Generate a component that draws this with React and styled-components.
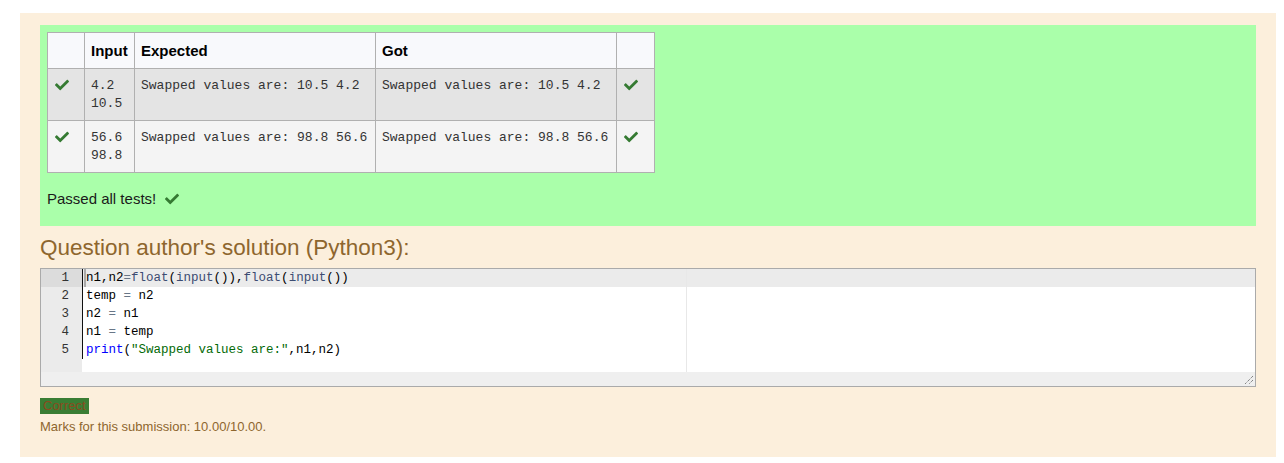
import React from "react";
import styled, { createGlobalStyle } from "styled-components";

const Global = createGlobalStyle`
  html, body { margin: 0; padding: 0; background: #fff; }
  body { font-family: "Liberation Sans", Arial, sans-serif; }
`;

const Page = styled.div`
  padding: 13px 8px 0 20px;
`;

const Outcome = styled.div`
  background: #fcefdc;
  padding: 12px 20px 22px 20px;
  color: #8e662e;
`;

const Feedback = styled.div`
  background: #aaffaa;
  padding: 7px 7px 17px 7px;
`;

const Table = styled.table`
  border-collapse: collapse;
  table-layout: fixed;
  width: 607px;
`;

const Th = styled.th`
  background: #f8f9fc;
  border: 1px solid #b0b0b0;
  text-align: left;
  font-weight: bold;
  font-size: 15px;
  line-height: 21px;
  color: #000;
  padding: 7px 6px 7px 6px;
  width: ${(p) => p.$w}px;
  box-sizing: border-box;
`;

const Tr = styled.tr`
  background: ${(p) => (p.$alt ? "#f4f4f4" : "#e4e4e4")};
`;

const Td = styled.td`
  border: 1px solid #b0b0b0;
  vertical-align: top;
  padding: 8px 6px 7px 6px;
  font-family: "Liberation Mono", "Courier New", monospace;
  font-size: 13px;
  line-height: 18px;
  color: #333;
  white-space: pre;
`;

const IconTd = styled.td`
  border: 1px solid #b0b0b0;
  vertical-align: top;
  padding: 9px 6px 7px 7px;
  line-height: 0;
`;

const Check = ({ size = 14 }) => (
  <svg width={size} height={size} viewBox="0 0 512 512" aria-hidden="true">
    <path
      fill="#357a32"
      d="M173.898 439.404l-166.4-166.4c-9.997-9.997-9.997-26.206 0-36.204l36.203-36.204c9.997-9.998 26.207-9.998 36.204 0L192 312.69 432.095 72.596c9.997-9.997 26.207-9.997 36.204 0l36.203 36.204c9.997 9.997 9.997 26.206 0 36.204l-294.4 294.401c-9.998 9.997-26.207 9.997-36.204-.001z"
    />
  </svg>
);

const Passed = styled.p`
  margin: 15px 0 0 0;
  font-size: 15px;
  line-height: 21px;
  color: #1a1a1a;
  display: flex;
  align-items: center;
  gap: 9px;
`;

const Heading = styled.h4`
  margin: 8px 0 7px 0;
  font-weight: normal;
  font-size: 22.5px;
  line-height: 27px;
  color: #8e662e;
`;

const Editor = styled.div`
  border: 1px solid #aaa;
  background: #efefef;
  position: relative;
`;

const EditorBody = styled.div`
  display: flex;
  font-family: "Liberation Mono", "Courier New", monospace;
  font-size: 12.5px;
  line-height: 18px;
`;

const Gutter = styled.div`
  width: 41px;
  background: #ebebeb;
  flex: none;
`;

const GutterCell = styled.div`
  height: 18px;
  text-align: right;
  padding-right: 13px;
  color: #333;
  background: ${(p) => (p.$active ? "#dcdcdc" : "transparent")};
`;

const Content = styled.div`
  flex: 1;
  background: #fff;
  padding-bottom: 13px;
  position: relative;
`;

const Lines = styled.div`
  border-left: 1px solid #111;
`;

const Line = styled.div`
  height: 18px;
  padding-left: 3px;
  white-space: pre;
  color: #000;
  background: ${(p) => (p.$active ? "#ebebeb" : "transparent")};
  position: relative;
  z-index: 1;
`;

const PrintMargin = styled.div`
  position: absolute;
  left: 604px;
  top: 0;
  bottom: 0;
  width: 1px;
  background: #e8e8e8;
  z-index: 2;
`;

const Cursor = styled.div`
  position: absolute;
  left: 1px;
  top: 0;
  width: 2px;
  height: 18px;
  background: #aaa;
  z-index: 3;
`;

const ScrollBar = styled.div`
  height: 14px;
  background: #efefef;
`;

const Resize = styled.svg`
  position: absolute;
  right: 1px;
  bottom: 1px;
`;

const Op = styled.span`color: #687687;`;
const Fn = styled.span`color: #3c4c72;`;
const Kw = styled.span`color: #0000ff;`;
const Str = styled.span`color: #036a07;`;

const Badge = styled.div`
  display: inline-block;
  margin-top: 11px;
  background: #3a7d34;
  color: #8a4b1f;
  font-size: 13px;
  line-height: 16px;
  padding: 0 3px;
`;

const Marks = styled.div`
  margin-top: 5px;
  font-size: 13px;
  line-height: 16px;
  color: #8e662e;
`;

const rows = [
  { input: "4.2\n10.5", exp: "Swapped values are: 10.5 4.2", got: "Swapped values are: 10.5 4.2" },
  { input: "56.6\n98.8", exp: "Swapped values are: 98.8 56.6", got: "Swapped values are: 98.8 56.6" },
];

export default function App() {
  return (
    <>
      <Global />
      <Page>
        <Outcome>
          <Feedback>
            <Table>
              <thead>
                <tr>
                  <Th $w={37}></Th>
                  <Th $w={50}>Input</Th>
                  <Th $w={241}>Expected</Th>
                  <Th $w={241}>Got</Th>
                  <Th $w={38}></Th>
                </tr>
              </thead>
              <tbody>
                {rows.map((r, i) => (
                  <Tr key={i} $alt={i % 2 === 1}>
                    <IconTd><Check /></IconTd>
                    <Td>{r.input}</Td>
                    <Td>{r.exp}</Td>
                    <Td>{r.got}</Td>
                    <IconTd><Check /></IconTd>
                  </Tr>
                ))}
              </tbody>
            </Table>
            <Passed>
              Passed all tests! <Check />
            </Passed>
          </Feedback>
          <Heading>Question author's solution (Python3):</Heading>
          <Editor>
            <EditorBody>
              <Gutter>
                {[1, 2, 3, 4, 5].map((n) => (
                  <GutterCell key={n} $active={n === 1}>{n}</GutterCell>
                ))}
              </Gutter>
              <Content>
                <PrintMargin />
                <Lines>
                  <Line $active>
                    <Cursor />
                    n1,n2<Op>=</Op><Fn>float</Fn>(<Fn>input</Fn>()),<Fn>float</Fn>(<Fn>input</Fn>())
                  </Line>
                  <Line>temp <Op>=</Op> n2</Line>
                  <Line>n2 <Op>=</Op> n1</Line>
                  <Line>n1 <Op>=</Op> temp</Line>
                  <Line><Kw>print</Kw>(<Str>"Swapped values are:"</Str>,n1,n2)</Line>
                </Lines>
              </Content>
            </EditorBody>
            <ScrollBar />
            <Resize width="10" height="10" viewBox="0 0 10 10">
              <path d="M9 1 L1 9 M9 5 L5 9" stroke="#555" strokeWidth="1" strokeDasharray="1 1" fill="none" />
            </Resize>
          </Editor>
          <Badge>Correct</Badge>
          <Marks>Marks for this submission: 10.00/10.00.</Marks>
        </Outcome>
      </Page>
    </>
  );
}
